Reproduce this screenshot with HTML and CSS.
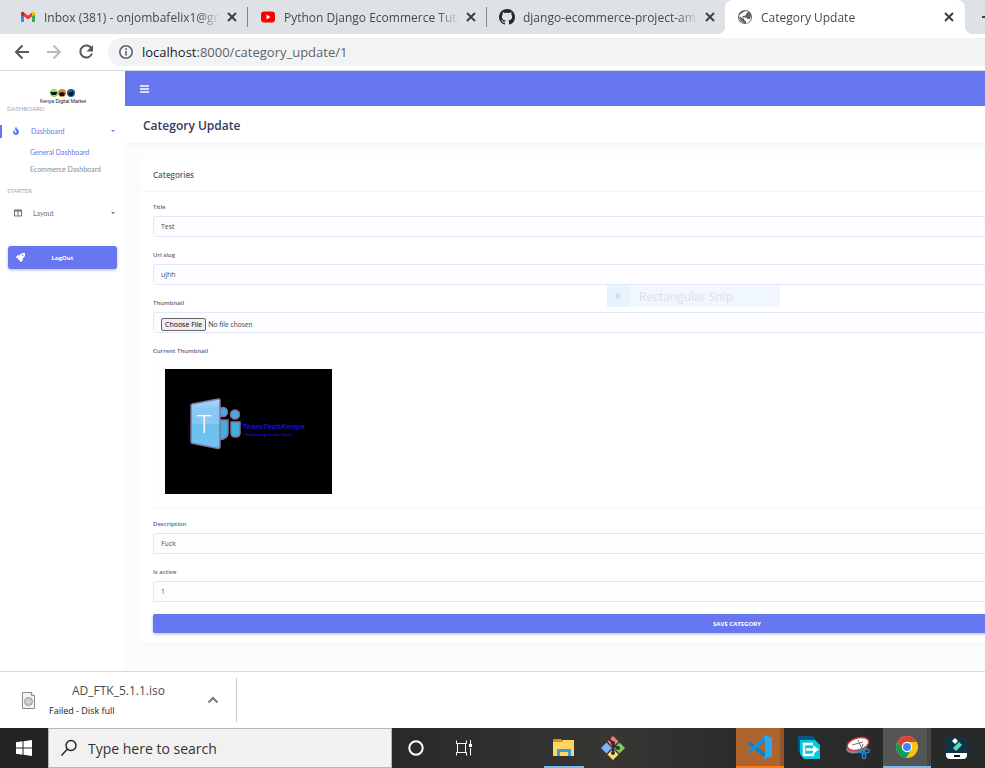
FILE: index.html
```html
<!DOCTYPE html>
<html lang="en">
<head>
<meta charset="utf-8">
<title>Category Update</title>
<link rel="stylesheet" href="styles.css">
</head>
<body>
<div class="tabs">
  <div class="tab tab-first">
    <svg class="favicon" viewBox="0 0 16 16"><path fill="#4285f4" d="M1 4v8q0 1 1 1h2V7z"/><path fill="#34a853" d="M15 4v8q0 1-1 1h-2V7z"/><path fill="#ea4335" d="M4 3.500 8 6.500l4-3V7.500l-4 3-4-3z"/><path fill="#c5221f" d="M1 4.500C1 2.500 3 2.500 4 3.500v4L1 5.500z"/><path fill="#fbbc04" d="M15 4.500c0-2-2-2-3-1v4l3-2z"/></svg>
    <span class="tab-title">Inbox (381) - onjombafelix1@gm</span>
    <button class="close" aria-label="Close tab"><svg viewBox="0 0 16 16"><path d="M4 4l8 8M12 4l-8 8"/></svg></button>
  </div>
  <div class="tab">
    <svg class="favicon" viewBox="0 0 16 16"><rect x="1" y="2.500" width="14" height="11" rx="3" fill="#f00"/><path fill="#fff" d="M6.500 5.500v5l4-2.500z"/></svg>
    <span class="tab-title">Python Django Ecommerce Tutor</span>
    <button class="close" aria-label="Close tab"><svg viewBox="0 0 16 16"><path d="M4 4l8 8M12 4l-8 8"/></svg></button>
  </div>
  <div class="tab tab-last">
    <svg class="favicon" viewBox="0 0 16 16"><path fill="#24292e" d="M8 0C3.580 0 0 3.580 0 8c0 3.540 2.290 6.530 5.470 7.590.4.070.55-.17.55-.38 0-.19-.01-.82-.01-1.490-2.010.37-2.530-.49-2.690-.94-.09-.23-.48-.94-.82-1.130-.28-.15-.68-.52-.01-.53.63-.01 1.080.58 1.230.82.72 1.210 1.870.87 2.330.66.07-.52.28-.87.51-1.070-1.780-.2-3.640-.89-3.640-3.950 0-.87.31-1.590.82-2.150-.08-.2-.36-1.020.08-2.120 0 0 .67-.21 2.200.82.64-.18 1.320-.27 2-.27s1.360.09 2 .27c1.530-1.040 2.200-.82 2.200-.82.44 1.100.16 1.920.08 2.120.51.56.82 1.270.82 2.150 0 3.070-1.870 3.750-3.650 3.950.29.25.54.73.54 1.480 0 1.070-.01 1.930-.01 2.200 0 .21.15.46.55.38A8.010 8.010 0 0 0 16 8c0-4.420-3.580-8-8-8z"/></svg>
    <span class="tab-title">django-ecommerce-project-ama</span>
    <button class="close" aria-label="Close tab"><svg viewBox="0 0 16 16"><path d="M4 4l8 8M12 4l-8 8"/></svg></button>
  </div>
  <div class="tab tab-active">
    <svg class="favicon" viewBox="0 0 16 16"><circle cx="8" cy="8" r="7" fill="#5f6368"/><path fill="#fff" d="M7.500 2.500 10 2l1 1.500-2 1V6L7 7H5.500v1.500H9l1.500 1.500H13l.8-3 .2 3-2 3-3 1.500V12L7 11V9.500L4.500 9 2.500 7v2.500l2 3L7 13.800 8 14l-3-.5-2.700-3L2 7l1.500-2z"/></svg>
    <span class="tab-title">Category Update</span>
    <button class="close" aria-label="Close tab"><svg viewBox="0 0 16 16"><path d="M4 4l8 8M12 4l-8 8"/></svg></button>
  </div>
  <button class="new-tab" aria-label="New tab"><svg viewBox="0 0 14 14"><path d="M1 7h12M7 1v12"/></svg></button>
</div>
<div class="toolbar">
  <button class="nav" aria-label="Back"><svg viewBox="0 0 16 16"><path d="M15 8H2M8.500 1.500 2 8l6.500 6.500"/></svg></button>
  <button class="nav nav-off" aria-label="Forward"><svg viewBox="0 0 16 16"><path d="M1 8h13M7.500 1.500 14 8l-6.500 6.500"/></svg></button>
  <button class="nav" aria-label="Reload"><svg viewBox="0 0 16 16"><path d="M13.500 4.500A6 6 0 1 0 14 9.500"/><path class="solid" d="M15 1v6.500H8.500z"/></svg></button>
  <div class="address">
    <svg viewBox="0 0 16 16"><circle cx="8" cy="8" r="6.200"/><path d="M8 7v4.500M8 4.300v1.700"/></svg>
    <span><b>localhost</b>:8000/category_update/1</span>
  </div>
</div>

<div class="page">
  <aside class="sidebar">
    <svg class="brand" viewBox="0 0 44 16" role="img" aria-label="Kenya Digital Market">
      <circle cx="13" cy="4" r="4" fill="#8edc68"/><circle cx="21" cy="4" r="4" fill="#d9872c"/><circle cx="30" cy="4" r="4" fill="#15619d"/>
      <path fill="#111" d="M10 3h6v1l-1 2h-4L9 3zM18 4l3-1 3 1-1 3h-4zM27 3l2 1 3-2v4l-2 1-2-1z"/>
      <text x="22" y="14" text-anchor="middle">Kenya Digital Market</text>
    </svg>
    <div class="caption">DASHBOARD</div>
    <a class="item item-active" href="#">
      <svg viewBox="0 0 384 512"><path d="M216 23.860c0-23.800-30.650-32.770-44.150-13.040C48 191.850 224 200 224 288c0 35.630-29.110 64.460-64.850 63.990-35.170-.45-63.150-29.770-63.150-64.940v-85.510c0-21.700-26.470-32.230-41.430-16.500C27.800 213.160 0 261.330 0 320c0 105.870 86.130 192 192 192s192-86.130 192-192c0-170.290-168-193-168-296.140z"/></svg>
      <span>Dashboard</span><i class="caret"></i>
    </a>
    <nav class="submenu">
      <a class="current" href="#">General Dashboard</a>
      <a href="#">Ecommerce Dashboard</a>
    </nav>
    <div class="caption">STARTER</div>
    <a class="item item-wide" href="#">
      <svg viewBox="0 0 512 512"><path d="M464 32H48C21.490 32 0 53.490 0 80v352c0 26.510 21.490 48 48 48h416c26.510 0 48-21.490 48-48V80c0-26.510-21.490-48-48-48zM224 416H64V160h160v256zm224 0H288V160h160v256z"/></svg>
      <span>Layout</span><i class="caret"></i>
    </a>
    <a class="logout" href="#">
      <svg viewBox="0 0 512 512"><path d="M505 19c-1-5-6-11-12-12C461 0 435 0 410 0 307 0 245 55 199 128H95c-16 0-36 12-43 26L3 253a28 28 0 0 0-3 11 24 24 0 0 0 24 24h104l-23 22c-11 12-13 33 0 46l51 51c11 11 32 13 45 0l23-23v104a24 24 0 0 0 24 24 28 28 0 0 0 11-3l98-49c15-7 27-26 27-43V313c72-46 128-109 128-211 0-26 0-51-7-83zM384 168a40 40 0 1 1 40-40 40 40 0 0 1-40 40z"/></svg>
      <span>LogOut</span>
    </a>
  </aside>
  <main class="main">
    <div class="navbar"><button aria-label="Toggle menu"><svg viewBox="0 0 9 8"><path d="M0 1h9M0 4h9M0 7h9"/></svg></button></div>
    <header class="heading"><h1>Category Update</h1></header>
    <section class="card">
      <h2>Categories</h2>
      <form class="form">
        <div class="field"><label for="title">Title</label><input id="title" type="text" value="Test"></div>
        <div class="field"><label for="slug">Url slug</label><input id="slug" type="text" value="ujhh"></div>
        <div class="field"><label for="thumb">Thumbnail</label><input id="thumb" type="file"></div>
        <div class="field">
          <span class="label">Current Thumbnail</span>
          <div class="preview">
            <svg viewBox="0 0 167 125" role="img" aria-label="TeamTechKenya">
              <defs><linearGradient id="sky" x1="0" y1="0" x2="0" y2="1"><stop offset="0" stop-color="#a4dcff"/><stop offset=".2" stop-color="#8dc8f4"/><stop offset=".5" stop-color="#84c8f1"/><stop offset=".53" stop-color="#6bc0ec"/><stop offset="1" stop-color="#70c5f0"/></linearGradient></defs>
              <rect width="167" height="125" fill="#000"/>
              <g fill="#42acdc" stroke="#8c6d9f" stroke-width="1.500"><circle cx="58" cy="43" r="4.500"/><circle cx="70" cy="45.500" r="4.500"/><path d="M54 51h9v13q0 6-9 7zM66 53h9v11q0 4-4.500 4T66 64z"/><path fill="url(#sky)" d="M27 35q-1 0-1 1.500v36q0 2 2 2l25 5q2 0 2-2v-46q0-2-2-1.500z"/></g>
              <text class="initial" x="39" y="64" text-anchor="middle">T</text>
              <text class="mark" x="77" y="60">TeamTechKenya</text>
              <text class="motto" x="80" y="67">Technology Is Our Voice</text>
            </svg>
          </div>
        </div>
        <div class="field"><label for="desc">Description</label><input id="desc" type="text" value="Fuck"></div>
        <div class="field"><label for="active">Is active</label><input id="active" type="text" value="1"></div>
        <button class="save" type="button">SAVE CATEGORY</button>
      </form>
    </section>
    <div class="snip"><span class="dot"></span><span>Rectangular Snip</span></div>
  </main>
</div>

<div class="downloads">
  <div class="download">
    <svg class="file" viewBox="0 0 13 17"><path fill="#f4f4f4" stroke="#8b8b8b" d="M.5.5h9l3 3v13H.5z"/><path fill="#fff" stroke="#8b8b8b" d="M9.500.5v3h3"/><circle cx="6.500" cy="9.500" r="4" fill="#c9cccb" stroke="#999"/><circle cx="6.500" cy="9.500" r="1.500" fill="#eee" stroke="#aaa" stroke-width=".5"/></svg>
    <div class="download-text"><div class="name">AD_FTK_5.1.1.iso</div><div class="status">Failed - Disk full</div></div>
    <button aria-label="Download options"><svg viewBox="0 0 12 12"><path d="M1.500 8.500 6 4l4.500 4.500"/></svg></button>
  </div>
</div>

<div class="taskbar">
  <button class="start" aria-label="Start"><svg viewBox="0 0 16 16"><path fill="#fff" d="M0 2.200 6.500 1.300v6.200H0zM7.500 1.200 16 0v7.500H7.500zM0 8.500h6.500v6.200L0 13.800zM7.500 8.500H16V16l-8.500-1.200z"/></svg></button>
  <label class="search"><svg viewBox="0 0 18 18"><circle cx="11" cy="6.500" r="5"/><path d="M7.500 10 1.500 16.500"/></svg><input type="text" placeholder="Type here to search" aria-label="Search"></label>
  <button class="slot" aria-label="Cortana"><svg viewBox="0 0 24 24"><circle cx="12" cy="12" r="6.700" fill="none" stroke="#fff" stroke-width="2"/></svg></button>
  <button class="slot" aria-label="Task View"><svg viewBox="0 0 24 24"><path fill="none" stroke="#fff" d="M4.500 4.500v3h10v-3M4.500 19.500v-3h10v3M5.500 7.500h8v9h-8zM18.500 4v4M18.500 12v7.500"/><path fill="#fff" d="M17 8h3v3h-3z"/></svg></button>
  <div class="apps">
    <button class="slot open" aria-label="File Explorer"><svg viewBox="0 0 24 24"><path fill="#dc9600" d="M1 4q0-1 1-1h7l2 2v3H1z"/><path fill="#ffd563" d="M1 6h9l1-2h11v16H1z"/><path fill="#399be0" d="M5 20v-6q0-1 1-1h12q1 0 1 1v6h-3v-4H8v4z"/></svg></button>
    <button class="slot" aria-label="Git"><svg viewBox="0 0 24 24"><path fill="#f57b7c" d="m12 0 5.500 5.500L12 11 6.500 5.500z"/><path fill="#80b3ff" d="m5.500 6.500 5.500 5.500-5.500 5.500L0 12z"/><path fill="#7cce54" d="m18.500 6.500 5.500 5.500-5.500 5.500L13 12z"/><path fill="#ffe179" d="m12 13 5.500 5.500L12 24l-5.500-5.500z"/><path fill="none" stroke="#303030" stroke-width="2" d="M8 3l4 4v11M12 8l5 5"/><g fill="#303030"><circle cx="12" cy="7" r="2"/><circle cx="17" cy="12" r="2"/><circle cx="12" cy="17" r="2"/></g></svg></button>
    <button class="slot alert" aria-label="Visual Studio Code"><svg viewBox="0 0 24 24"><path fill="#0a80cd" d="m0 8 2-1.500L17 18v5L0 9z"/><path fill="#1590dc" d="M0 16 17 1v6L2 18l-2-1z"/><path fill="#29a9f2" d="M17 0l7 3v18l-7 3-2-1 2-2V3l-2-2z"/></svg></button>
    <button class="slot" aria-label="File transfer"><svg viewBox="0 0 24 24"><path fill="#075783" d="M1 0h15l3 4H5v14l-4-3z"/><path fill="#08c6dd" d="M3 4h15l5 5v14H7l-4-5z"/><path fill="none" stroke="#fff" stroke-width="2.500" d="M16 8H7v11h9v-2M9 13.500h9"/><path fill="#fff" d="m16 9 6 4.500-6 4.500z"/></svg></button>
    <button class="slot" aria-label="Snipping Tool"><svg viewBox="0 0 24 24"><ellipse cx="11" cy="11" rx="11" ry="6" transform="rotate(-16 11 11)" fill="#888"/><ellipse cx="12" cy="8" rx="11" ry="6" transform="rotate(-16 12 8)" fill="#fff" stroke="#d6393c" stroke-width="1.500"/><path stroke="#777" d="m6 9 11-3M12 4l5 11M17 8l-3 9"/><g fill="none" stroke="#2187cd" stroke-width="1.400"><ellipse cx="15" cy="15" rx="2.500" ry="1.700"/><ellipse cx="21" cy="15" rx="2.500" ry="1.700"/><ellipse cx="18" cy="20" rx="1.700" ry="2.500"/></g></svg></button>
    <button class="slot focused" aria-label="Google Chrome"><svg viewBox="0 0 24 24"><circle cx="12" cy="12" r="11" fill="#fbc116"/><path fill="#da4437" d="M2.500 6.500a11 11 0 0 1 19 0V7H12l-4 8z"/><path fill="#109d58" d="M2.500 6.500A11 11 0 0 0 11 23l5.500-8.500L8 15z"/><circle cx="12" cy="12" r="5.200" fill="#fff"/><circle cx="12" cy="12" r="4" fill="#4285f4"/></svg></button>
    <button class="slot" aria-label="Filmora"><svg viewBox="0 0 24 24"><rect x="2" y="1" width="21" height="22" rx="4" fill="#123247"/><path fill="#fff" d="m11 2 3 3-3 3-3-3z"/><path fill="#4de0c4" d="m9 12 6-6 3 3-6 6z"/><path fill="#fff" d="M2 17h21v2q0 4-4 4H6q-4 0-4-4z"/><path stroke="#111" stroke-width="2" d="M10 20h6"/></svg></button>
  </div>
</div>
</body>
</html>
```
FILE: styles.css
```css
* { box-sizing: border-box; }
body {
  margin: 0;
  min-height: 100vh;
  display: flex;
  flex-direction: column;
  overflow: hidden;
  font-family: "Open Sans", "Noto Sans", sans-serif;
  font-size: 12px;
  background: #fff;
}
button { border: 0; padding: 0; background: none; font: inherit; }
svg { display: block; flex: none; }
a { color: inherit; text-decoration: none; }
h1, h2 { margin: 0; font-weight: 600; }

/* Browser tabs */
.tabs { display: flex; height: 34px; background: #dee1e6; overflow: hidden; }
.tab {
  flex: none;
  width: 239px;
  display: flex;
  align-items: center;
  gap: 8px;
  padding: 0 8px 0 12px;
  color: #45494d;
  position: relative;
}
.tab::after {
  content: "";
  position: absolute;
  right: 0;
  top: 7px;
  height: 20px;
  border-right: 1px solid #85888c;
}
.tab-first { width: 248px; padding-left: 20px; }
.tab-last { width: 238px; padding-right: 7px; }
.tab-last::after { display: none; }
.tab-active { width: 240px; background: #fff; border-radius: 8px 8px 0 0; }
.tab-active::before, .tab-active::after {
  content: "";
  position: absolute;
  top: auto;
  bottom: 0;
  width: 8px;
  height: 8px;
  border: 0;
}
.tab-active::before { left: -8px; background: radial-gradient(circle at 0 0, transparent 8px, #fff 8px); }
.tab-active::after { right: -8px; background: radial-gradient(circle at 100% 0, transparent 8px, #fff 8px); }
.favicon { width: 16px; height: 16px; }
.tab-title {
  flex: 1;
  min-width: 0;
  margin-right: -4px;
  overflow: hidden;
  white-space: nowrap;
  -webkit-mask-image: linear-gradient(90deg, #000 88%, transparent);
  mask-image: linear-gradient(90deg, #000 88%, transparent);
}
.close svg { width: 16px; height: 16px; fill: none; stroke: #3c4043; stroke-width: 2; }
.new-tab { margin-left: 16px; flex: none; }
.new-tab svg { width: 14px; height: 14px; stroke: #3c4043; stroke-width: 2; }

/* Browser toolbar */
.toolbar {
  display: flex;
  align-items: center;
  gap: 16px;
  height: 37px;
  padding-left: 14px;
  border-bottom: 1px solid #d9dadd;
}
.nav svg { width: 16px; height: 16px; fill: none; stroke: #55585c; stroke-width: 2; }
.nav .solid { fill: #55585c; stroke: none; }
.nav-off svg { stroke: #b9bbbd; }
.address {
  flex: 1;
  display: flex;
  align-items: center;
  gap: 8px;
  height: 28px;
  margin-left: -2px;
  padding-left: 10px;
  border-radius: 14px 0 0 14px;
  background: #f1f3f4;
  color: #5f6368;
  font-size: 13px;
}
.address b { font-weight: 400; color: #202124; }
.address svg { width: 16px; height: 16px; fill: none; stroke: #5f6368; stroke-width: 1.600; }

/* Web page */
.page { flex: 1; display: flex; color: #6c757d; font-size: 7px; }
.sidebar { flex: none; width: 125px; padding-top: 18px; background: #fff; font-family: Lato, "Open Sans", sans-serif; }
.brand { width: 44px; height: 16px; margin: 0 auto; overflow: visible; }
.brand text { font: 5px "Liberation Sans", sans-serif; fill: #111; }
.caption { padding-left: 7px; line-height: 8px; font-size: 6px; color: #a0a8b0; }
.item {
  display: flex;
  align-items: center;
  height: 20px;
  margin-top: 8px;
  padding: 0 10px 0 12px;
  position: relative;
}
.item svg { width: 8px; height: 8px; margin-right: 11px; fill: currentColor; }
.item-wide svg { margin: 0 11px 0 2px; }
.item-active { color: #6777ef; }
.item-active::before {
  content: "";
  position: absolute;
  left: 0;
  top: 4px;
  width: 2px;
  height: 13px;
  background: #6777ef;
}
.caret { margin-left: auto; border: 2px solid transparent; border-top-color: currentColor; border-bottom: 0; }
.submenu { margin: 3px 0 9px; padding-left: 30px; }
.submenu a { display: block; line-height: 17px; white-space: nowrap; color: #868e96; }
.submenu .current { color: #6777ef; }
.logout {
  display: flex;
  align-items: center;
  height: 23px;
  margin: 23px 8px 0;
  padding: 0 8px;
  border-radius: 3px;
  background: #6777ef;
  box-shadow: 0 1px 3px #acb5f6;
  color: #fff;
  font: 700 6px "Open Sans", sans-serif;
}
.logout svg { width: 9px; height: 9px; fill: #fff; }
.logout span { flex: 1; text-align: center; padding-right: 9px; }
.main { flex: 1; min-width: 0; position: relative; overflow: hidden; background: #fafdfb; }
.navbar { height: 35px; padding: 14px 15px; background: #6777ef; }
.navbar svg { width: 9px; height: 8px; stroke: #fff; stroke-width: 1.500; }
.navbar button { display: block; }
.heading {
  height: 37px;
  padding-left: 18px;
  background: #fff;
  box-shadow: 0 1px 4px rgba(0, 0, 0, .04);
}
.heading h1 { font-size: 12px; line-height: 39px; color: #34395e; }

/* The form runs on past the right edge of the window. */
.card {
  margin: 15px -349px 28px 15px;
  border-radius: 2px;
  background: #fff;
  box-shadow: 0 2px 4px rgba(0, 0, 0, .03);
}
.card h2 {
  padding-left: 13px;
  font-size: 8px;
  line-height: 33px;
  border-bottom: 1px solid #f5f6f7;
  color: #5a6167;
}
.form { display: flex; flex-direction: column; gap: 12px; padding: 9px 13px 10px; }
.field { display: flex; flex-direction: column; gap: 3px; }
.field label, .label { font-size: 6px; line-height: 12px; font-weight: 600; color: #5c6280; }
.field input {
  width: 100%;
  height: 21px;
  padding: 0 7px;
  border: 1px solid #e4e6fc;
  border-radius: 2px;
  background: #fdfdff;
  color: #495057;
  font: 7px "Open Sans", sans-serif;
}
.field input[type="file"] { padding-top: 5px; font-family: Lato, sans-serif; }
.field input::file-selector-button {
  height: 13px;
  margin: 0 2px 0 0;
  padding: 0 3px;
  border: 1px solid #666;
  border-radius: 2px;
  background: #efefef;
  font: 7px "Open Sans", sans-serif;
}
.preview { padding: 9px 12px 12px; box-shadow: 0 2px 4px rgba(0, 0, 0, .03); }
.preview svg { width: 167px; height: 125px; }
.initial { fill: #fff; font: 26px Lato, sans-serif; font-weight: 300; }
.mark, .motto { fill: #1410dc; font-family: "Liberation Sans", sans-serif; font-style: italic; font-weight: 700; }
.mark { font-size: 8px; }
.motto { font-size: 4px; }
.save {
  height: 19px;
  border-radius: 2px;
  background: #6777ef;
  box-shadow: 0 1px 3px #acb5f6;
  color: #fff;
  font-size: 6px;
  font-weight: 700;
}
.snip {
  position: absolute;
  left: 482px;
  top: 214px;
  width: 173px;
  height: 22px;
  display: flex;
  align-items: center;
  gap: 10px;
  background: #f0f7fe;
  color: #dfe0e1;
  font-size: 12px;
}
.dot { width: 22px; height: 22px; padding: 8px; background: #e8f4fd; }
.dot::before { content: ""; display: block; width: 6px; height: 6px; border-radius: 50%; background: #dfe0e1; }

/* Downloads bar */
.downloads { height: 57px; padding: 6px 0; border-top: 1px solid #d9dadd; background: #fff; }
.download {
  display: flex;
  align-items: center;
  width: 237px;
  height: 44px;
  padding: 0 17px 0 22px;
  border-right: 1px solid #c8c8c8;
}
.file { width: 13px; height: 17px; margin-right: 14px; }
.download-text { flex: 1; }
.name { padding-left: 23px; line-height: 22px; color: #4a4d50; }
.status { font-size: 9px; line-height: 18px; color: #222; }
.download button svg { width: 12px; height: 12px; fill: none; stroke: #76797c; stroke-width: 2; }

/* Desktop taskbar */
.taskbar { display: flex; height: 40px; background: linear-gradient(90deg, #222325, #292929 40%, #383633 62%, #2a2b2b 75%, #272828); }
.start { width: 48px; display: grid; place-items: center; flex: none; }
.start svg { width: 16px; height: 16px; }
.search {
  flex: none;
  width: 344px;
  display: flex;
  align-items: center;
  gap: 10px;
  padding-left: 11px;
  border: 1px solid #b5b5b5;
  background: #f1f1f1;
}
.search svg { width: 18px; height: 18px; fill: none; stroke: #222; stroke-width: 1.400; }
.search input { flex: 1; min-width: 0; border: 0; padding: 0; background: none; font: 14px "Open Sans", sans-serif; }
.search input::placeholder { color: #333; }
.slot { flex: none; width: 48px; height: 40px; display: grid; place-items: center; }
.slot svg { width: 24px; height: 24px; }
.apps { display: flex; gap: 1px; margin-left: 52px; }
.open { background: linear-gradient(#76b9ed, #76b9ed) center bottom / 40px 2px no-repeat; }
.alert { margin-left: 98px; background: #ad652d; border-bottom: 2px solid #ff7a0c; box-shadow: inset -4px 0 #925527; }
.focused { background: #555; border-bottom: 2px solid #76b9ed; box-shadow: inset -4px 0 #474747; }
```
